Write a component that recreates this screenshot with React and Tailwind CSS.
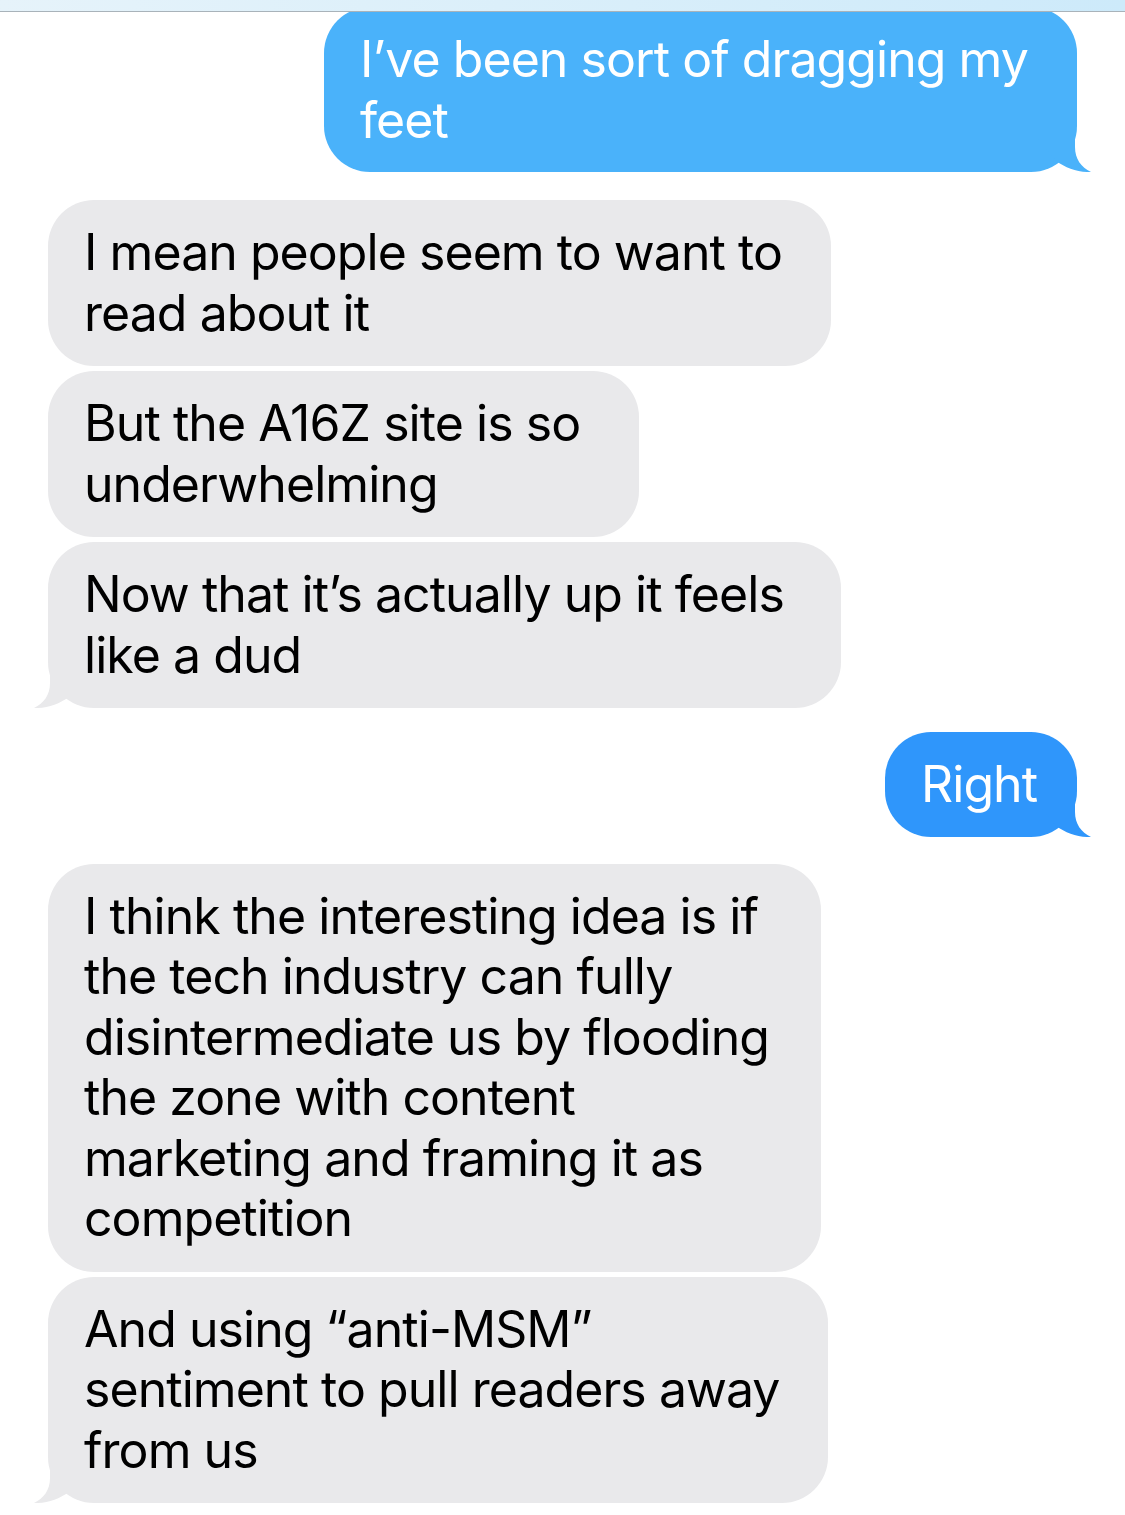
import React from "react";

function TailRight({ color }) {
  return (
    <svg
      className="absolute right-[-16px] bottom-0"
      width="55"
      height="53"
      viewBox="0 0 55 53"
      fill={color}
    >
      <path d="M37 0 L37 28 C37 40 43 48 53 53 C40 53.5 28 49 18 42 L0 20 L0 0 Z" />
    </svg>
  );
}

function TailLeft({ color }) {
  return (
    <svg
      className="absolute left-[-16px] bottom-0"
      width="55"
      height="53"
      viewBox="0 0 55 53"
      fill={color}
    >
      <path d="M18 0 L18 28 C18 40 12 48 2 53 C15 53.5 27 49 37 42 L55 20 L55 0 Z" />
    </svg>
  );
}

const textCls =
  "text-[50px] leading-[60.5px] whitespace-nowrap tracking-[-0.95px]";

function Gray({ w, lines, tail }) {
  return (
    <div className="flex justify-start">
      <div
        className={`relative rounded-[46px] bg-[#e9e9eb] pl-[36px] pt-[22px] pb-[23px] text-black ${w}`}
      >
        <div className={`relative z-10 ${textCls}`}>
          {lines.map((l, i) => (
            <div key={i}>{l}</div>
          ))}
        </div>
        {tail && <TailLeft color="#e9e9eb" />}
      </div>
    </div>
  );
}

function Blue({ w, lines, color, pl }) {
  return (
    <div className="flex justify-end">
      <div
        className={`relative rounded-[46px] py-[22px] text-white ${w} ${pl} ${color}`}
      >
        <div className={`relative z-10 ${textCls}`}>
          {lines.map((l, i) => (
            <div key={i}>{l}</div>
          ))}
        </div>
        <TailRight color={color === "bg-[#4ab2fa]" ? "#4ab2fa" : "#2f96fb"} />
      </div>
    </div>
  );
}

export default function App() {
  return (
    <div
      className="relative w-[1125px] h-[1515px] overflow-hidden bg-white"
      style={{ fontFamily: "Inter, 'Noto Sans', 'Liberation Sans', sans-serif" }}
    >
      <div className="absolute top-0 left-0 right-0 z-20 h-[12px] bg-gradient-to-r from-[#e6f3fa] to-[#cdeafa] border-b border-[#a9b3ba]" />
      <div className="flex flex-col px-[48px] pt-[7px]">
        <Blue
          w="w-[753px]"
          pl="pl-[36px]"
          color="bg-[#4ab2fa]"
          lines={["I\u2019ve been sort of dragging my", "feet"]}
        />
        <div className="h-[28px]" />
        <div className="flex flex-col gap-[5px]">
          <Gray
            w="w-[783px]"
            lines={["I mean people seem to want to", "read about it"]}
          />
          <Gray w="w-[591px]" lines={["But the A16Z site is so", "underwhelming"]} />
          <Gray
            w="w-[793px]"
            tail
            lines={["Now that it\u2019s actually up it feels", "like a dud"]}
          />
        </div>
        <div className="h-[24px]" />
        <Blue w="w-[192px]" pl="pl-[36px]" color="bg-[#2f96fb]" lines={["Right"]} />
        <div className="h-[27px]" />
        <div className="flex flex-col gap-[5px]">
          <Gray
            w="w-[773px]"
            lines={[
              "I think the interesting idea is if",
              "the tech industry can fully",
              "disintermediate us by flooding",
              "the zone with content",
              "marketing and framing it as",
              "competition",
            ]}
          />
          <Gray
            w="w-[780px]"
            tail
            lines={[
              "And using \u201canti-MSM\u201d",
              "sentiment to pull readers away",
              "from us",
            ]}
          />
        </div>
      </div>
    </div>
  );
}
